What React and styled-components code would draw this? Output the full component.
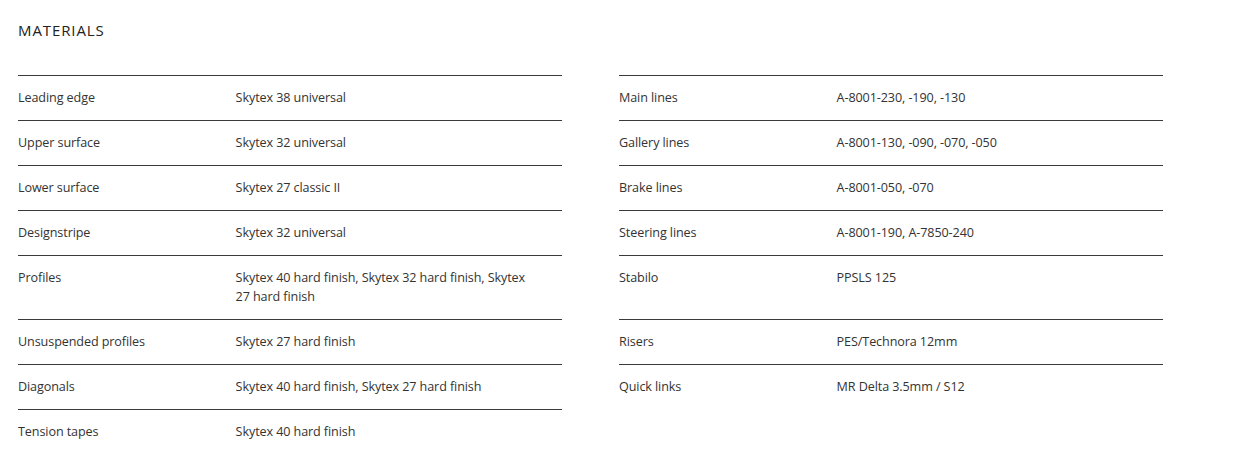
import React from 'react';
import styled, { createGlobalStyle } from 'styled-components';

const rows = [
  [['Leading edge', 'Skytex 38 universal'], ['Main lines', 'A-8001-230, -190, -130']],
  [['Upper surface', 'Skytex 32 universal'], ['Gallery lines', 'A-8001-130, -090, -070, -050']],
  [['Lower surface', 'Skytex 27 classic II'], ['Brake lines', 'A-8001-050, -070']],
  [['Designstripe', 'Skytex 32 universal'], ['Steering lines', 'A-8001-190, A-7850-240']],
  [['Profiles', 'Skytex 40 hard finish, Skytex 32 hard finish, Skytex 27 hard finish'], ['Stabilo', 'PPSLS 125']],
  [['Unsuspended profiles', 'Skytex 27 hard finish'], ['Risers', 'PES/Technora 12mm']],
  [['Diagonals', 'Skytex 40 hard finish, Skytex 27 hard finish'], ['Quick links', 'MR Delta 3.5mm / S12']],
  [['Tension tapes', 'Skytex 40 hard finish'], null],
];

const GlobalStyle = createGlobalStyle`
  body {
    margin: 0;
    background: #ffffff;
    font-family: "Open Sans", "Noto Sans", sans-serif;
    color: #333333;
  }
`;

const Page = styled.div`
  padding: 20px 18px 0;
`;

const Title = styled.h2`
  margin: 0 0 35px;
  font-size: 15px;
  font-weight: 400;
  letter-spacing: 0.9px;
  line-height: 20px;
  color: #222222;
`;

const Table = styled.div`
  display: grid;
  grid-template-columns: 544px 544px;
  column-gap: 57px;
`;

const Entry = styled.div`
  display: grid;
  grid-template-columns: 40% 60%;
  border-top: 1px solid ${(p) => (p.$empty ? 'transparent' : '#3a3a3a')};
  padding: 12px 0 13px;
  font-size: 12.6px;
  letter-spacing: -0.1px;
  line-height: 19px;
`;

const Label = styled.div`
  color: #333333;
`;

const Value = styled.div`
  color: #333333;
  padding-right: 30px;
`;

export default function App() {
  return (
    <Page>
      <GlobalStyle />
      <Title>MATERIALS</Title>
      <Table>
        {rows.map((pair, i) => (
          <React.Fragment key={i}>
            {pair.map((item, j) =>
              item ? (
                <Entry key={j}>
                  <Label>{item[0]}</Label>
                  <Value>{item[1]}</Value>
                </Entry>
              ) : (
                <Entry key={j} $empty />
              )
            )}
          </React.Fragment>
        ))}
      </Table>
    </Page>
  );
}
